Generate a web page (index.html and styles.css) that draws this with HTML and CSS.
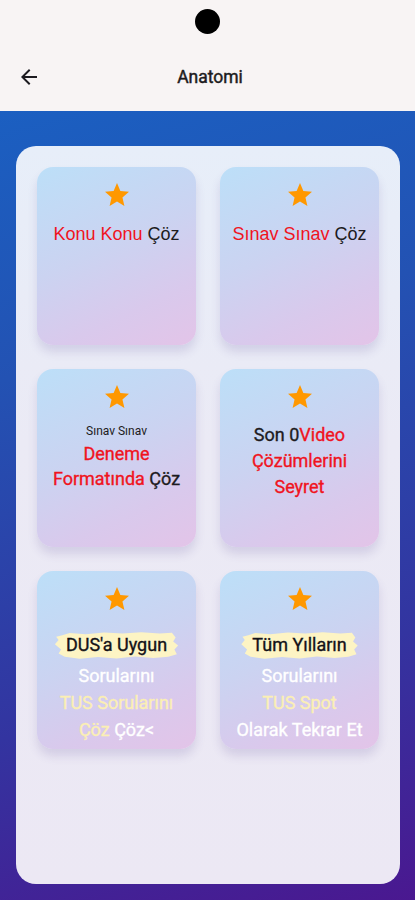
FILE: index.html
```html
<!DOCTYPE html>
<html lang="tr">
<head>
<meta charset="utf-8">
<title>Anatomi</title>
<link rel="stylesheet" href="styles.css">
</head>
<body>
<div class="app">
  <header class="topbar">
    <div class="status"><span class="camera"></span></div>
    <div class="appbar">
      <button class="back" aria-label="Geri">
        <svg width="24" height="24" viewBox="0 0 24 24"><path d="M20 11H7.83l5.59-5.59L12 4l-8 8 8 8 1.41-1.41L7.83 13H20v-2z" fill="#1d1b20"/></svg>
      </button>
      <h1 class="title">Anatomi</h1>
      <span class="spacer"></span>
    </div>
  </header>
  <main class="main">
    <section class="panel">
      <div class="card">
        <svg class="star" viewBox="2 2 20 19"><path d="M12 17.27L18.18 21l-1.64-7.03L22 9.24l-7.19-.61L12 2 9.19 8.63 2 9.24l5.46 4.73L5.82 21z"/></svg>
        <p class="label arial"><span class="red">Konu Konu</span> Çöz</p>
      </div>
      <div class="card">
        <svg class="star" viewBox="2 2 20 19"><path d="M12 17.27L18.18 21l-1.64-7.03L22 9.24l-7.19-.61L12 2 9.19 8.63 2 9.24l5.46 4.73L5.82 21z"/></svg>
        <p class="label arial"><span class="red">Sınav Sınav</span> Çöz</p>
      </div>
      <div class="card">
        <svg class="star" viewBox="2 2 20 19"><path d="M12 17.27L18.18 21l-1.64-7.03L22 9.24l-7.19-.61L12 2 9.19 8.63 2 9.24l5.46 4.73L5.82 21z"/></svg>
        <p class="small">Sınav Sınav</p>
        <p class="label"><span class="red">Deneme<br>Formatında</span> Çöz</p>
      </div>
      <div class="card">
        <svg class="star" viewBox="2 2 20 19"><path d="M12 17.27L18.18 21l-1.64-7.03L22 9.24l-7.19-.61L12 2 9.19 8.63 2 9.24l5.46 4.73L5.82 21z"/></svg>
        <p class="label first">Son 0<span class="red">Video<br>Çözümlerini<br>Seyret</span></p>
      </div>
      <div class="card">
        <svg class="star" viewBox="2 2 20 19"><path d="M12 17.27L18.18 21l-1.64-7.03L22 9.24l-7.19-.61L12 2 9.19 8.63 2 9.24l5.46 4.73L5.82 21z"/></svg>
        <p class="mark">DUS'a Uygun</p>
        <p class="label white">Sorularını<br><span class="cream">TUS Sorularını<br>Çöz</span> Çöz&lt;</p>
      </div>
      <div class="card">
        <svg class="star" viewBox="2 2 20 19"><path d="M12 17.27L18.18 21l-1.64-7.03L22 9.24l-7.19-.61L12 2 9.19 8.63 2 9.24l5.46 4.73L5.82 21z"/></svg>
        <p class="mark">Tüm Yılların</p>
        <p class="label white">Sorularını<br><span class="cream">TUS Spot</span><br>Olarak Tekrar Et</p>
      </div>
    </section>
  </main>
</div>
</body>
</html>
```

FILE: styles.css
```css
* { box-sizing: border-box; }

html, body {
  margin: 0;
  padding: 0;
}

body {
  width: 415px;
  height: 900px;
  font-family: Roboto, "Noto Sans", "Liberation Sans", sans-serif;
  color: #1d1b20;
  overflow: hidden;
}

.app {
  display: flex;
  flex-direction: column;
  height: 900px;
}

.topbar {
  background: #f8f4f4;
  height: 111px;
  display: flex;
  flex-direction: column;
}

.status {
  height: 45px;
  display: flex;
  justify-content: center;
  padding-top: 9px;
}

.camera {
  width: 25px;
  height: 25px;
  border-radius: 50%;
  background: #000;
}

.appbar {
  height: 66px;
  display: flex;
  align-items: center;
  padding: 0 8px 2px 17px;
}

.back {
  width: 24px;
  height: 24px;
  padding: 0;
  border: 0;
  background: none;
  display: flex;
}

.title {
  flex: 1;
  margin: 0;
  text-align: center;
  font-size: 17.5px;
  font-weight: 400;
  -webkit-text-stroke: 0.45px #1d1b20;
  color: #1d1b20;
  padding-right: 4px;
}

.spacer { width: 24px; }

.main {
  flex: 1;
  display: flex;
  background: linear-gradient(165deg, #1b5fc1 0%, #2352b3 30%, #3334a0 70%, #4a1890 100%);
  padding: 35px 15px 16px 16px;
}

.panel {
  flex: 1;
  border-radius: 20px;
  background: linear-gradient(180deg, #e7eef9 0%, #ebeaf5 40%, #ece8f4 100%);
  padding: 21px;
  display: grid;
  grid-template-columns: 1fr 1fr;
  grid-auto-rows: 178px;
  column-gap: 24px;
  row-gap: 24px;
  align-content: start;
}

.card {
  border-radius: 16px;
  background: linear-gradient(155deg, #bcdff8 0%, #cbd3f1 45%, #d9c9ec 75%, #e3c4e8 100%);
  box-shadow: 0 7px 10px rgba(90, 70, 150, 0.16);
  display: flex;
  flex-direction: column;
  align-items: center;
  text-align: center;
  padding-top: 16px;
}

.star {
  width: 24px;
  height: 23px;
  fill: #ff9800;
  flex: none;
}

.label {
  margin: 13px 0 0;
  font-size: 18px;
  font-weight: 400;
  -webkit-text-stroke: 0.35px currentColor;
  line-height: 26px;
  color: #1d1b20;
}

.label.arial {
  font-family: "Liberation Sans", Arial, sans-serif;
  -webkit-text-stroke: 0;
  font-size: 18px;
  margin-top: 15px;
}

.label.first { margin-top: 14px; }

.small {
  margin: 15px 0 0;
  font-size: 12px;
  line-height: 16px;
  color: #1d1b20;
}

.small + .label { margin-top: 2px; line-height: 25px; }

.red { color: #f0141e; }

.white { color: #ffffff; margin-top: 5px; line-height: 27px; }

.cream { color: #fbefb4; }

.mark {
  position: relative;
  isolation: isolate;
  margin: 23px 0 0;
  font-size: 18px;
  font-weight: 400;
  -webkit-text-stroke: 0.35px #141218;
  line-height: 24px;
  color: #141218;
  padding: 0 6px;
}

.mark::before {
  content: "";
  position: absolute;
  z-index: -1;
  left: -5px;
  right: -5px;
  top: -1px;
  bottom: -2px;
  background: #fdf4c4;
  clip-path: polygon(0% 45%, 3% 30%, 1% 18%, 6% 12%, 12% 4%, 25% 8%, 40% 2%, 55% 6%, 70% 1%, 85% 6%, 95% 3%, 98% 20%, 96% 35%, 100% 50%, 97% 65%, 99% 82%, 92% 92%, 80% 96%, 65% 91%, 50% 98%, 35% 93%, 20% 99%, 8% 92%, 3% 80%, 5% 65%);
}
```
